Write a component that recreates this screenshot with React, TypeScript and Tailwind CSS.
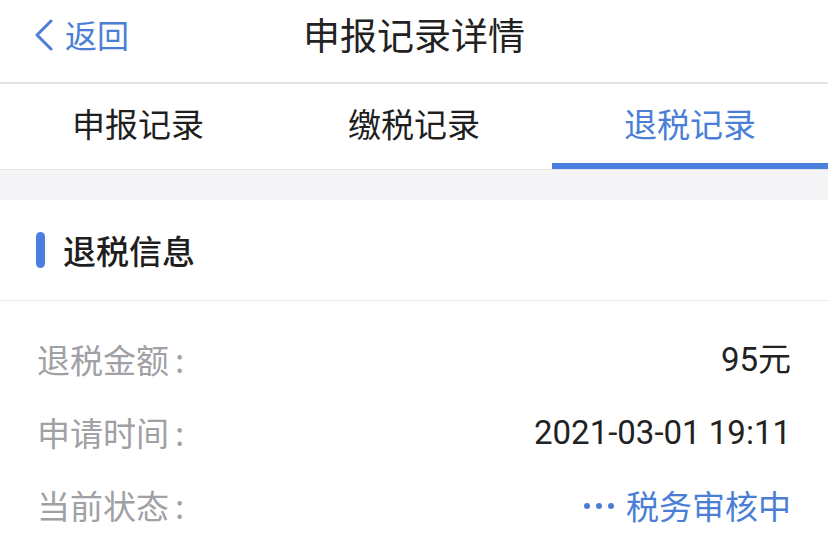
import React from 'react';

const FONT = '"Noto Sans CJK SC", "Noto Sans", sans-serif';
const NUM_FONT = 'Roboto, "Noto Sans CJK SC", sans-serif';

const TABS = ['申报记录', '缴税记录', '退税记录'];

const ROWS = [
  { label: '退税金额', value: '95元' },
  { label: '申请时间', value: '2021-03-01 19:11' },
];

export default function App() {
  const active = 2;

  return (
    <div className="w-[828px] h-[541px] overflow-hidden bg-white" style={{ fontFamily: FONT }}>
      {/* header */}
      <header className="h-[84px] grid grid-cols-[1fr_auto_1fr] items-center border-b-2 border-[#e4e4e6]">
        <button className="flex items-center gap-[11px] pl-[34px] -mt-[12px] text-[#4b7fd6] text-[32px] leading-none">
          <svg width="20" height="32" viewBox="0 0 20 32" fill="none">
            <polyline points="17,2 3,16 17,30" stroke="#4b7fd6" strokeWidth="3" strokeLinecap="round" strokeLinejoin="round" />
          </svg>
          <span className="-mt-[2px]">返回</span>
        </button>
        <h1 className="text-[37px] leading-none text-[#222222] -mt-[14px]">申报记录详情</h1>
        <div />
      </header>

      {/* tabs */}
      <nav className="h-[86px] grid grid-cols-3 border-b border-[#e4e4e6]">
        {TABS.map((t, i) => (
          <div
            key={t}
            className={`flex items-center justify-center text-[33px] leading-none border-b-[6px] ${i === active ? 'text-[#4b7fd6] border-[#4a7fe0]' : 'text-[#1f1f1f] border-transparent'}`}
          >
            <span>{t}</span>
          </div>
        ))}
      </nav>

      <div className="h-[30px] bg-[#f4f4f6]" />

      {/* section */}
      <section>
        <div className="h-[101px] flex items-center gap-[18px] pl-[36px] border-b border-[#ebebed]">
          <div className="w-[9px] h-[36px] rounded-full bg-[#4a7fe0]" />
          <h2 className="text-[33px] leading-none font-medium text-[#1f1f1f]">退税信息</h2>
        </div>

        <div className="pt-[22px] pl-[37px] pr-[37px]">
          {ROWS.map(r => (
            <div key={r.label} className="h-[73px] flex items-center justify-between">
              <span className="text-[33px] leading-none text-[#a0a0a5]">
                {r.label}<span className="ml-[6px]">:</span>
              </span>
              <span className="text-[33px] leading-none text-[#222222]" style={{ fontFamily: NUM_FONT }}>{r.value}</span>
            </div>
          ))}
          <div className="h-[73px] flex items-center justify-between">
            <span className="text-[33px] leading-none text-[#a0a0a5]">
              当前状态<span className="ml-[6px]">:</span>
            </span>
            <span className="flex items-center gap-[12px] text-[33px] leading-none text-[#4b7fd6]">
              <span className="flex gap-[6px]">
                <span className="w-[6px] h-[6px] rounded-full bg-[#4b7fd6]" />
                <span className="w-[6px] h-[6px] rounded-full bg-[#4b7fd6]" />
                <span className="w-[6px] h-[6px] rounded-full bg-[#4b7fd6]" />
              </span>
              税务审核中
            </span>
          </div>
        </div>
      </section>
    </div>
  );
}
